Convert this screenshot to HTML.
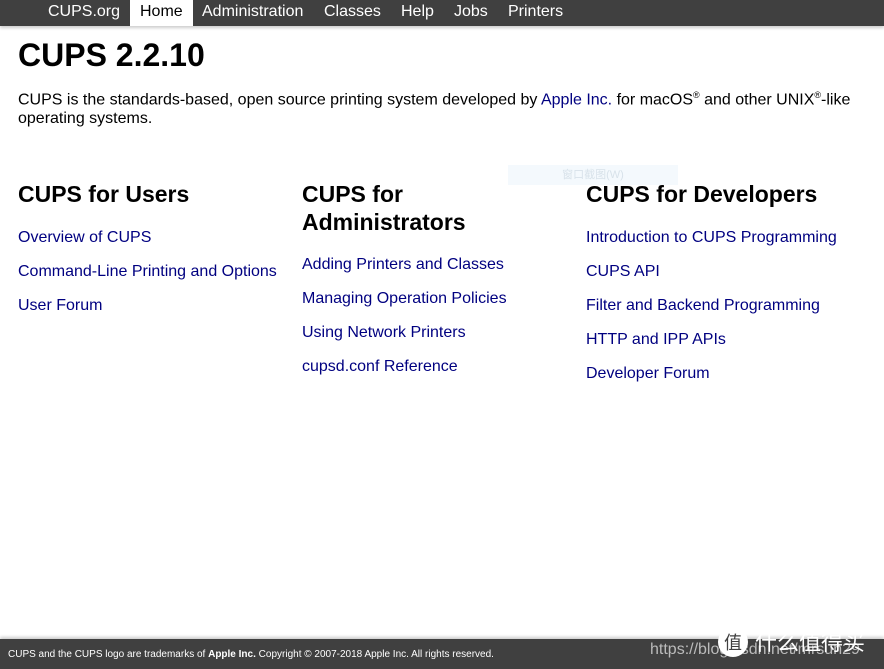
<!DOCTYPE html>
<html><head><meta charset="utf-8"><style>
body{margin:0;width:884px;height:669px;background:#fff;font-family:"Liberation Sans",Arial,sans-serif;position:relative;overflow:hidden;color:#000}
.nav{position:absolute;top:0;left:0;width:884px;height:26px;background:#404040;box-shadow:0 2px 3px rgba(0,0,0,.2)}
.nav span{position:absolute;top:3px;font-size:16px;color:#fff;line-height:18px}
.nav .home{background:#fff;color:#000;top:0;height:26px;line-height:24px;padding:0 10px;left:130px}
h1{position:absolute;left:18px;top:37px;margin:0;font-size:32px;font-weight:bold}
p.intro{position:absolute;left:18px;top:86px;margin:0;font-size:16px;line-height:19px;width:850px}
sup{font-size:9px}
a{color:#000080;text-decoration:none}
.col{position:absolute;top:180px;width:270px}
.col h2{margin:0 0 20px;font-size:23px;line-height:28px;font-weight:bold}
.col a{display:block;font-size:16px;line-height:19px;margin-bottom:15px}
.foot{position:absolute;left:0;top:639px;width:884px;height:30px;background:#404040;box-shadow:0 -2px 3px rgba(0,0,0,.2);color:#fff;font-size:10px}
.foot .t{position:absolute;left:8px;top:10px}
.foot .w{position:absolute;left:650px;top:2px;font-size:16px;color:#bbb}
</style></head><body>
<div class="nav">
<span style="left:48px">CUPS.org</span>
<span class="home">Home</span>
<span style="left:202px">Administration</span>
<span style="left:324px">Classes</span>
<span style="left:401px">Help</span>
<span style="left:454px">Jobs</span>
<span style="left:508px">Printers</span>
</div>
<h1>CUPS 2.2.10</h1>
<p class="intro">CUPS is the standards-based, open source printing system developed by <a href="#">Apple Inc.</a> for macOS<sup>®</sup> and other UNIX<sup>®</sup>-like operating systems.</p>
<div style="position:absolute;left:508px;top:165px;width:170px;height:20px;background:#f4f9fd;color:#d8e2ea;font-size:11px;text-align:center;line-height:20px">窗口截图(W)</div>
<div class="col" style="left:18px"><h2>CUPS for Users</h2>
<a href="#">Overview of CUPS</a><a href="#">Command-Line Printing and Options</a><a href="#">User Forum</a></div>
<div class="col" style="left:302px;top:180px"><h2>CUPS for<br>Administrators</h2>
<a href="#" style="margin-top:-1px">Adding Printers and Classes</a><a href="#">Managing Operation Policies</a><a href="#">Using Network Printers</a><a href="#">cupsd.conf Reference</a></div>
<div class="col" style="left:586px"><h2>CUPS for Developers</h2>
<a href="#">Introduction to CUPS Programming</a><a href="#">CUPS API</a><a href="#">Filter and Backend Programming</a><a href="#">HTTP and IPP APIs</a><a href="#">Developer Forum</a></div>
<div class="foot"><span class="t">CUPS and the CUPS logo are trademarks of <b>Apple Inc.</b> Copyright © 2007-2018 Apple Inc. All rights reserved.</span>
<span class="w">https://blog.csdn.net/mrsun29</span>
<span style="position:absolute;left:718px;top:-12px;width:30px;height:30px;border-radius:50%;background:#fff;color:#404040;font-size:18px;text-align:center;line-height:30px;font-family:'Noto Sans CJK SC',sans-serif">值</span>
<span style="position:absolute;left:755px;top:-14px;font-size:22px;color:#fff;font-family:'Noto Sans CJK SC',sans-serif">什么值得买</span></div>
</body></html>
